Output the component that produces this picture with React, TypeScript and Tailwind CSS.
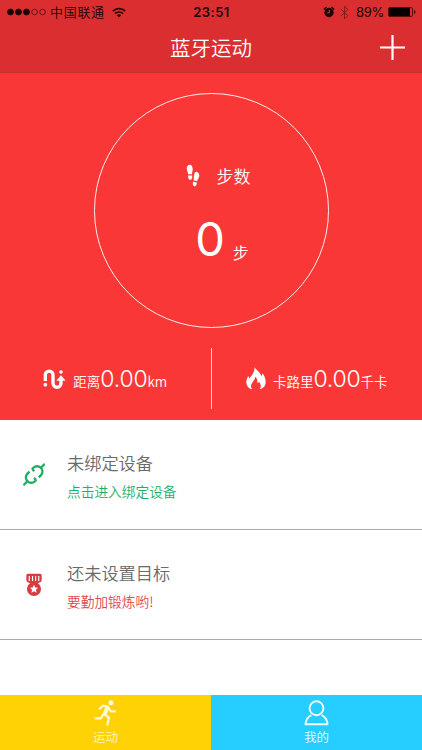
import type { ReactNode } from 'react';

function FootprintsIcon() {
  return (
    <svg viewBox="48 40 42 70" className="h-[23px] w-[14px]" fill="#fff">
      <path d="M59 42c6 0 9 6 9 13 0 6-2 11-2 16H54c0-6-4-10-4-17 0-7 4-12 9-12z" />
      <path d="M54 75h12.500c.5 8-1 13-6 13s-7-6-6.500-13z" />
      <path d="M81 64c5 1 8 6 7 13-1 6-5 9-6 15l-11-2c1-6 0-9 1-15 1-7 4-12 9-11z" />
      <path d="M69 94l12 2c-1 8-4 12-8 12-5-1-5-7-4-14z" />
    </svg>
  );
}

function RouteIcon() {
  return (
    <svg viewBox="43 85 69 60" className="h-5 w-[23px]" fill="none" stroke="#fff" strokeWidth="10">
      <path d="M50 121v-18a11.500 11.500 0 0 1 23 0v25a12 12 0 0 0 24 0v-10" />
      <circle cx="50" cy="132" r="5.500" fill="#fff" stroke="none" />
      <circle cx="97" cy="94" r="5.500" fill="#fff" stroke="none" />
      <path d="M97 104l14 16H83z" fill="#fff" stroke="none" />
    </svg>
  );
}

function FireIcon() {
  return (
    <svg viewBox="121 81 60 69" className="h-[23px] w-5" fill="#fff">
      <path d="M147 81c2 8 18 15 20 28 2-3 3-5 3-9 7 8 10 17 10 26 0 12-8 20-18 22 6-9 3-17-2-23-2 3-3 4-5 4 1-9-1-14-6-19-1 11-13 18-13 29 0 4 2 7 4 9-11-2-18-11-18-22 0-8 4-11 5-18 2 2 3 4 3 8 9-9 17-21 17-35z" />
    </svg>
  );
}

function LinkIcon() {
  return (
    <svg viewBox="67 71 66 68" className="h-[23px] w-[22px]" fill="none" stroke="#1fae68" strokeWidth="7">
      <g transform="rotate(-45 100.500 105)">
        <path d="M55 105h20M126 105h20" />
        <path d="M97 89H88a16 16 0 0 0 0 32h6M93 121v-9" />
        <path d="M104 121h9a16 16 0 0 0 0-32h-6M108 89v9" />
      </g>
    </svg>
  );
}

function MedalIcon() {
  return (
    <svg viewBox="77 70 49 71" className="h-6 w-4" fill="#d63c40">
      <path d="M83 71h37q5 0 5 5v14q0 5-5 7l-9 4H92l-9-4q-5-2-5-7V76q0-5 5-5z" />
      <circle cx="101.500" cy="118" r="21.500" />
      <path d="M87 78v15M97 78v15M106.500 78v15M116 78v15" stroke="#fff" strokeWidth="3.500" />
      <path d="M101.500 105l3.800 8 8.700 1-6.500 6 1.800 9-7.800-4.500-7.800 4.500 1.800-9-6.500-6 8.700-1z" fill="#fff" />
    </svg>
  );
}

function RunnerIcon() {
  return (
    <svg
      viewBox="73 43 69 78"
      className="h-[26px] w-[23px]"
      fill="none"
      stroke="#fff9d8"
      strokeWidth="6.500"
      strokeLinecap="round"
      strokeLinejoin="round"
    >
      <circle cx="124" cy="51.500" r="7.500" fill="#fff9d8" stroke="none" />
      <path d="M90 69l9-9 14 3" />
      <path d="M113 66l-8 19" strokeWidth="12" />
      <path d="M117 67l7 10h12" />
      <path d="M106 87l12 9-5 21" />
      <path d="M100 87l-6 11H77" />
    </svg>
  );
}

function UserIcon() {
  return (
    <svg viewBox="297 43 75 79" className="h-[26px] w-[25px]" fill="none" stroke="#effbff" strokeWidth="6">
      <circle cx="334.500" cy="68" r="21" />
      <path d="M319 89c-11 5-17 14-18 28h67c-1-14-7-23-18-28" strokeLinejoin="round" />
    </svg>
  );
}

function StatusBar() {
  return (
    <div className="flex h-6 items-center justify-between pr-[6px] pl-[7px] text-[13px] leading-6 text-[#200405]">
      <div className="flex w-[160px] items-center">
        <svg viewBox="0 0 39 8" className="mr-[4px] h-2 w-[39px]" fill="#140202" stroke="#3b0709">
          <circle cx="3.500" cy="4" r="3" />
          <circle cx="11.500" cy="4" r="3" />
          <circle cx="19.500" cy="4" r="3" />
          <circle cx="27.500" cy="4" r="2.800" fill="none" strokeWidth=".7" />
          <circle cx="35.500" cy="4" r="2.800" fill="none" strokeWidth=".7" />
        </svg>
        <span className="font-[350] tracking-[0.700px]">中国联通</span>
        <svg viewBox="0 0 14 11" className="ml-[7px] h-[11px] w-[14px]" fill="none" stroke="#200405" strokeWidth="1.700">
          <path d="M.8 4.200a9 9 0 0 1 12.400 0M3 6.600a5.800 5.800 0 0 1 8 0" />
          <path d="M7 10.600L4.800 8.300a3.200 3.200 0 0 1 4.400 0z" fill="#200405" stroke="none" />
        </svg>
      </div>
      <span className="font-['Inter'] text-[13px] font-semibold tracking-[0.5px]">23:51</span>
      <div className="flex w-[160px] items-center justify-end">
        <svg viewBox="0 0 12 12" className="h-3 w-3" fill="#200405">
          <circle cx="6" cy="6.500" r="4.700" />
          <path d="M.8 3.500L3.500 1M8.500 1l2.700 2.500" stroke="#200405" strokeWidth="1.500" />
          <path d="M6.300 3.700v3.100H4" fill="none" stroke="#db2e30" />
        </svg>
        <svg viewBox="0 0 9 15" className="ml-[5px] h-[15px] w-[9px]" fill="none" stroke="#8c1c1f">
          <path d="M.8 4l7 6.500L4.500 14V1l3.300 3.500L.8 11" />
        </svg>
        <span className="ml-[7px] font-['Inter'] text-[13px] tracking-[-0.300px]">89%</span>
        <svg viewBox="0 0 28 10" className="ml-[4px] h-[10px] w-7">
          <rect x=".5" y=".5" width="24" height="9" rx="1.500" fill="none" stroke="#5c0d10" />
          <rect x="1" y="1" width="21" height="8" fill="#080000" />
          <path d="M26 3q1.500.5 1.500 2T26 7z" fill="#3b0709" />
        </svg>
      </div>
    </div>
  );
}

function Stat({ icon, label, value, unit }: { icon: ReactNode; label: string; value: string; unit: string }) {
  return (
    <div className="flex flex-1 items-center justify-center">
      {icon}
      <div className="mt-[3px] ml-[7px] flex items-baseline text-[13.500px] leading-8 font-[350]">
        <span>{label}</span>
        <span className="font-['Inter'] text-[23px] tracking-[-0.200px]">{value}</span>
        <span>{unit}</span>
      </div>
    </div>
  );
}

interface RowProps {
  icon: ReactNode;
  title: string;
  hint: string;
  hintClass: string;
}

function Row({ icon, title, hint, hintClass }: RowProps) {
  return (
    <div className="flex h-[110px] items-center border-b border-[#a9a9a9]">
      <div className="flex w-[67px] justify-center">{icon}</div>
      <div className="pt-[3px]">
        <p className="text-[17.200px] leading-7 font-[350] text-[#6a6a6a]">{title}</p>
        <p className={`mt-[2px] text-[13.700px] leading-6 font-[350] ${hintClass}`}>{hint}</p>
      </div>
    </div>
  );
}

export default function App() {
  return (
    <div className="flex h-[750px] w-[422px] flex-col overflow-hidden bg-white font-['Noto_Sans_CJK_SC',sans-serif]">
      <header className="h-[73px] border-b border-[#c92c2c] bg-[#db2e30]">
        <StatusBar />
        <div className="relative flex h-[47px] items-center justify-center">
          <h1 className="text-[20.500px] leading-none font-[350] text-white">蓝牙运动</h1>
          <svg viewBox="0 0 25 25" className="absolute right-[17px] h-[25px] w-[25px]" stroke="#fff" strokeWidth="2.200">
            <path d="M12.500 0v25M0 12.500h25" />
          </svg>
        </div>
      </header>

      {/* Passos do dia */}
      <section className="flex h-[347px] flex-col items-center bg-[#fa3737] pt-5 text-white">
        <div className="flex h-[235px] w-[235px] flex-col items-center rounded-full border border-white/90 pt-[68px]">
          <div className="flex items-center gap-[17px] pl-[14px]">
            <FootprintsIcon />
            <span className="pt-[2px] text-[17px] leading-6 font-[350]">步数</span>
          </div>
          <div className="mt-[21px] flex items-baseline gap-2 pl-[22px]">
            <span className="font-['Inter'] text-[47px] leading-[60px] font-normal">0</span>
            <span className="translate-y-[3px] text-[16px] font-[350]">步</span>
          </div>
        </div>
        <div className="mt-5 flex h-[61px] w-full items-center">
          <Stat icon={<RouteIcon />} label="距离" value="0.00" unit="km" />
          <div className="h-full w-px bg-white/80" />
          <Stat icon={<FireIcon />} label="卡路里" value="0.00" unit="千卡" />
        </div>
      </section>

      <main className="flex-1">
        <Row icon={<LinkIcon />} title="未绑定设备" hint="点击进入绑定设备" hintClass="text-[#1fae68]" />
        <Row icon={<MedalIcon />} title="还未设置目标" hint="要勤加锻炼哟!" hintClass="text-[#e04a4c]" />
      </main>

      {/* Navegação inferior */}
      <nav className="flex h-[55px] text-[12.500px] leading-[22px] font-[350]">
        <button className="flex flex-1 flex-col items-center bg-[#ffd205] pt-[5px] text-[#fff6c4]">
          <RunnerIcon />
          运动
        </button>
        <button className="flex flex-1 flex-col items-center bg-[#26cdff] pt-[5px] text-[#effbff]">
          <UserIcon />
          我的
        </button>
      </nav>
    </div>
  );
}
